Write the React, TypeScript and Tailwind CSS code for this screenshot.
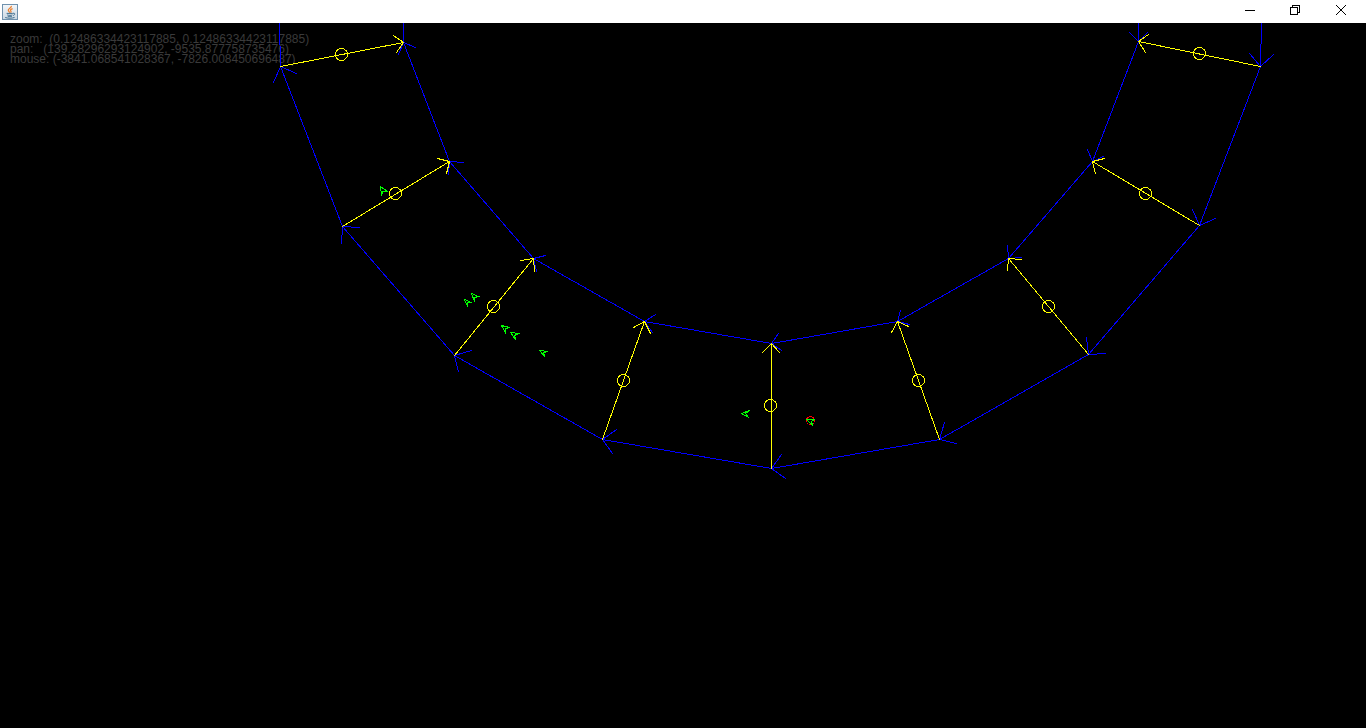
type Point = [number, number];

interface GateNode {
  at: Point;
  wings: [Point, Point];
}

const outerTrack: GateNode[] = [
  { at: [280, 66], wings: [[273, 82], [296, 73]] },
  { at: [342, 226], wings: [[341, 243], [359, 227]] },
  { at: [454, 355], wings: [[458, 371], [471, 350]] },
  { at: [602, 439], wings: [[612, 453], [616, 429]] },
  { at: [771, 468], wings: [[781, 454], [785, 478]] },
  { at: [939, 439], wings: [[944, 422], [956, 443]] },
  { at: [1088, 354], wings: [[1086, 337], [1105, 353]] },
  { at: [1199, 225], wings: [[1192, 209], [1215, 218]] },
  { at: [1260, 66], wings: [[1249, 53], [1273, 54]] },
];

const innerTrack: GateNode[] = [
  { at: [403, 42], wings: [[398, 54], [415, 47]] },
  { at: [449, 161], wings: [[448, 174], [463, 162]] },
  { at: [533, 258], wings: [[536, 271], [545, 255]] },
  { at: [644, 321], wings: [[652, 332], [655, 314]] },
  { at: [771, 343], wings: [[778, 333], [781, 350]] },
  { at: [897, 321], wings: [[900, 310], [909, 324]] },
  { at: [1008, 258], wings: [[1007, 245], [1021, 257]] },
  { at: [1092, 161], wings: [[1087, 149], [1103, 156]] },
  { at: [1138, 41], wings: [[1129, 32], [1147, 32]] },
];

const gates: { wings: [Point, Point]; centre: Point }[] = [
  { wings: [[393, 35], [396, 52]], centre: [341, 54] },
  { wings: [[437, 158], [446, 173]], centre: [395, 193] },
  { wings: [[520, 260], [534, 271]], centre: [493, 306] },
  { wings: [[633, 327], [650, 333]], centre: [623, 380] },
  { wings: [[762, 352], [779, 352]], centre: [770, 405] },
  { wings: [[891, 332], [908, 326]], centre: [918, 380] },
  { wings: [[1021, 259], [1007, 270]], centre: [1048, 306] },
  { wings: [[1104, 158], [1095, 173]], centre: [1145, 193] },
  { wings: [[1148, 34], [1145, 52]], centre: [1199, 53] },
];

// Each craft: nose, port tail, notch, starboard tail.
const crafts: Point[][] = [
  [[380, 186], [387, 191], [382, 191], [381, 195]],
  [[464, 299], [471, 302], [467, 302], [467, 306]],
  [[471, 293], [478, 296], [474, 297], [474, 301]],
  [[501, 325], [509, 327], [505, 328], [505, 332]],
  [[510, 332], [518, 333], [514, 335], [515, 339]],
  [[539, 350], [547, 351], [543, 352], [544, 356]],
  [[741, 413], [749, 410], [745, 413], [748, 417]],
  [[806, 419], [814, 419], [811, 421], [812, 425]],
];

const join = (points: Point[]) => points.map((p) => p.join(",")).join(" ");

function Chevron({ tip, wings }: { tip: Point; wings: [Point, Point] }) {
  return <polyline points={join([wings[0], tip, wings[1]])} />;
}

function Track({ nodes, start, end }: { nodes: GateNode[]; start: Point; end: Point }) {
  return (
    <g>
      <polyline points={join([start, ...nodes.map((n) => n.at), end])} />
      {nodes.map((n) => (
        <Chevron key={n.at[0]} tip={n.at} wings={n.wings} />
      ))}
    </g>
  );
}

function JavaIcon() {
  return (
    <svg width="16" height="16" viewBox="0 0 16 16" fill="none" aria-hidden="true">
      <defs>
        <linearGradient id="tile" x1="0" y1="0" x2="0" y2="1">
          <stop offset="0" stopColor="#f4f7fa" />
          <stop offset="1" stopColor="#c9d7e3" />
        </linearGradient>
      </defs>
      <rect x="0.5" y="0.5" width="15" height="15" fill="url(#tile)" stroke="#6f91ad" />
      <path d="M9.4 1.8C9.8 4 5.8 4.4 6.3 6.4C6.5 7.3 7.5 7.8 7.8 8.7M10.6 4.6C8.3 5.4 8 6.2 8.9 7.1C9.3 7.6 9 8.2 8.6 8.7" stroke="#ed8232" strokeWidth="1.3" />
      <path d="M4.6 9.4H10.8M5.2 10.9C6.5 11.5 9.3 11.5 10.4 10.9M5.7 12.3H10M3.2 13.5C5.5 14.4 10.5 14.4 12.6 13.4M11 9.3C13.3 8.6 13.3 11 11.2 11.5" stroke="#44708f" />
    </svg>
  );
}

function TitleBar() {
  const control = "flex h-full w-[46px] items-center justify-center";
  return (
    <header className="flex h-[23px] shrink-0 items-center justify-between bg-white px-[2px]">
      <JavaIcon />
      <div className="flex h-full pb-[3px]">
        <button type="button" aria-label="Minimize" className={control}>
          <svg width="12" height="10" shapeRendering="crispEdges">
            <rect x="2" y="5" width="10" height="1" />
          </svg>
        </button>
        <button type="button" aria-label="Restore" className={control}>
          <svg width="10" height="10" fill="none" stroke="#000" shapeRendering="crispEdges">
            <path d="M0.5 2.5H7.5V9.5H0.5ZM2.5 2.5V0.5H9.5V7.5H7.5" />
          </svg>
        </button>
        <button type="button" aria-label="Close" className={control}>
          <svg width="10" height="10" stroke="#000">
            <path d="M0 0L10 10M10 0L0 10" />
          </svg>
        </button>
      </div>
    </header>
  );
}

export default function App() {
  return (
    <div className="flex h-screen flex-col overflow-hidden bg-black font-['Liberation_Sans',Arial,sans-serif]">
      <TitleBar />
      <main className="relative min-h-0 flex-1 px-[10px] pt-[11px]">
        <div className="text-[12px] leading-[10px] whitespace-pre text-[#3a3a3a]">
          <p>zoom:  (0.12486334423117885, 0.12486334423117885)</p>
          <p>pan:   (139.28296293124902, -9535.877758735476)</p>
          <p>mouse: (-3841.068541028367, -7826.008450696487)</p>
        </div>
        <svg
          className="absolute inset-0 h-full w-full"
          fill="none"
          strokeWidth="1"
          strokeLinecap="square"
          shapeRendering="crispEdges"
          role="img"
          aria-label="Track view"
        >
          <g transform="translate(0.5 -22.5)">
            <g stroke="#0000ff">
              <Track nodes={outerTrack} start={[279, 22]} end={[1261, 22]} />
              <Track nodes={innerTrack} start={[403, 22]} end={[1138, 22]} />
            </g>
            <g stroke="#ffff00">
              {gates.map((gate, i) => (
                <g key={gate.centre[0]}>
                  <polyline points={join([outerTrack[i].at, innerTrack[i].at])} />
                  <Chevron tip={innerTrack[i].at} wings={gate.wings} />
                  <circle cx={gate.centre[0]} cy={gate.centre[1]} r="6" />
                </g>
              ))}
            </g>
            <circle cx="810" cy="420" r="4" stroke="#ff0000" />
            <g stroke="#00ff00">
              {crafts.map((points) => (
                <polygon key={points[0][0]} points={join(points)} />
              ))}
            </g>
          </g>
        </svg>
      </main>
    </div>
  );
}
